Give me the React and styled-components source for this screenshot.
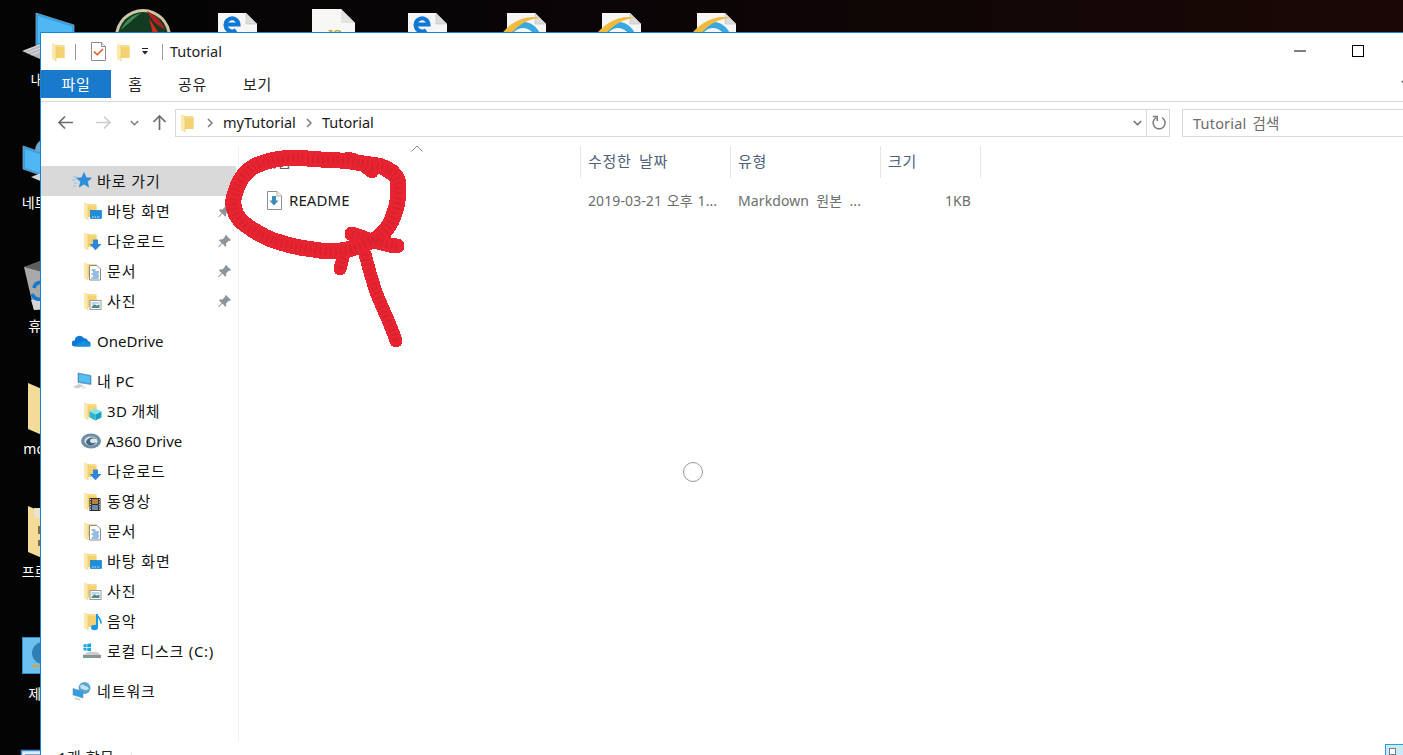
import React from 'react';
import styled, { createGlobalStyle } from 'styled-components';

const UI_FONT = '"Noto Sans", "Noto Sans CJK KR", sans-serif';

const GlobalStyle = createGlobalStyle`
  html, body {
    margin: 0;
    padding: 0;
    height: 100%;
    overflow: hidden;
    background: #050505;
  }
  #root {
    height: 100%;
  }
`;

const Desktop = styled.div`
  position: relative;
  width: 100%;
  height: 100vh;
  overflow: hidden;
  display: flex;
  align-items: flex-start;
  font-family: ${UI_FONT};
  background: linear-gradient(90deg, #040404 0%, #0a0506 45%, #1b0806 100%);
`;

const DesktopColumn = styled.div`
  flex: 0 0 95px;
  padding-top: 8px;
  display: flex;
  flex-direction: column;
`;

const DesktopRow = styled.div`
  padding-top: 8px;
  display: flex;
`;

const DesktopCell = styled.div`
  flex: none;
  width: 95px;
  height: 122.9px;
  padding-top: 4px;
  box-sizing: border-box;
  display: flex;
  flex-direction: column;
  align-items: center;
  color: #fff;
  font-size: 14px;
  line-height: 20px;
  svg {
    flex: none;
    overflow: visible;
    margin-bottom: 2px;
  }
`;

const Window = styled.div`
  position: absolute;
  left: 40px;
  top: 32px;
  width: 1406px;
  height: 743px;
  box-sizing: border-box;
  border: 1px solid #1583d8;
  background: #fff;
  display: flex;
  flex-direction: column;
  color: #1a1a1a;
  font-size: 15px;
`;

const TitleBar = styled.div`
  flex: 0 0 37px;
  display: flex;
  align-items: center;
  padding-left: 11px;
`;

const QatSlot = styled.span`
  display: flex;
  align-items: center;
  margin-left: ${p => p.$ml || 0}px;
`;

const QatSeparator = styled.span`
  width: 1px;
  height: 16px;
  background: #9a9a9a;
  margin-left: ${p => p.$ml}px;
`;

const WindowTitle = styled.span`
  margin-left: 7px;
  padding-bottom: 2px;
  font-size: 14.5px;
  line-height: 20px;
  color: #222;
`;

const WindowControls = styled.div`
  margin-left: auto;
  display: flex;
  height: 100%;
`;

const ControlButton = styled.span`
  width: 58px;
  display: flex;
  align-items: center;
  justify-content: center;
  padding-bottom: 1px;
  box-sizing: border-box;
`;

const Ribbon = styled.div`
  flex: 0 0 32px;
  box-sizing: border-box;
  display: flex;
  align-items: flex-start;
  border-bottom: 1px solid #dadada;
  position: relative;
`;

const RibbonTab = styled.span`
  height: 28px;
  box-sizing: border-box;
  width: ${p => p.$w}px;
  padding-bottom: 2px;
  display: flex;
  align-items: center;
  justify-content: center;
  font-size: 15px;
  letter-spacing: 0.6px;
  background: ${p => (p.$active ? '#1979ca' : 'transparent')};
  color: ${p => (p.$active ? '#fff' : '#222')};
`;

const RibbonChevron = styled.span`
  position: absolute;
  right: 35px;
  top: 10px;
  line-height: 0;
`;

const NavBar = styled.div`
  flex: 0 0 44px;
  box-sizing: border-box;
  display: flex;
  align-items: flex-start;
  padding: 7px 13px 0 14px;
`;

const NavButton = styled.span`
  flex: none;
  width: 20px;
  height: 27px;
  display: flex;
  align-items: center;
  justify-content: center;
  margin-right: ${p => p.$mr || 0}px;
`;

const AddressBox = styled.div`
  flex: 1;
  height: 28px;
  box-sizing: border-box;
  border: 1px solid #d9d9d9;
  display: flex;
  align-items: center;
  padding-left: 5px;
  min-width: 0;
`;

const Crumb = styled.span`
  font-size: 14.5px;
  padding-bottom: 2px;
  color: #1a1a1a;
  margin-left: ${p => p.$ml}px;
`;

const CrumbArrow = styled.svg`
  flex: none;
  margin-left: ${p => p.$ml}px;
`;

const AddressEnd = styled.span`
  margin-left: auto;
  display: flex;
  align-items: center;
  height: 100%;
`;

const RefreshCell = styled.span`
  width: 21px;
  height: 100%;
  margin-left: 3px;
  padding-left: 1px;
  box-sizing: content-box;
  border-left: 1px solid #d9d9d9;
  display: flex;
  align-items: center;
  justify-content: center;
`;

const SearchBox = styled.div`
  flex: 0 0 250px;
  margin-left: 12px;
  height: 28px;
  box-sizing: border-box;
  border: 1px solid #d9d9d9;
  display: flex;
  align-items: center;
  padding: 0 0 2px 10px;
  font-size: 14.5px;
  letter-spacing: 0.2px;
  word-spacing: 2px;
  color: #6d6d6d;
`;

const Body = styled.div`
  flex: 1;
  display: flex;
  min-height: 0;
`;

const Sidebar = styled.nav`
  flex: 0 0 198px;
  box-sizing: border-box;
  padding-top: 20px;
  border-right: 1px solid #f0f0f0;
`;

const NavGroup = styled.div`
  margin-bottom: 10px;
`;

const NavRow = styled.div`
  height: 30px;
  margin-right: 2px;
  display: flex;
  align-items: center;
  gap: 5px;
  padding-left: ${p => (p.$child ? 41 : 31)}px;
  padding-right: 5px;
  background: ${p => (p.$selected ? '#d9d9d9' : 'transparent')};
  svg {
    flex: none;
  }
`;

const LABEL_SPACING = { ko: 0.9, wide: 0.7, mixed: 0.35, latin: 0 };

const NavLabel = styled.span`
  font-size: 15px;
  line-height: 20px;
  letter-spacing: ${p => LABEL_SPACING[p.$kind || 'ko']}px;
  white-space: nowrap;
  color: #111;
`;

const PinSlot = styled.span`
  margin-left: auto;
  line-height: 0;
`;

const Content = styled.div`
  flex: 1;
  position: relative;
`;

const ColumnsGrid = styled.div`
  display: grid;
  grid-template-columns: 342px 150px 150px 100px;
  justify-content: start;
`;

const HeaderCell = styled.div`
  height: 32px;
  box-sizing: border-box;
  border-right: 1px solid #e5e5e5;
  padding: 5px 0 0 ${p => p.$pl ?? 7}px;
  font-size: 15px;
  line-height: 20px;
  letter-spacing: 0.7px;
  word-spacing: 3px;
  color: #4c607a;
`;

const SortChevron = styled.svg`
  position: absolute;
  left: 172px;
  top: -1px;
`;

const FileCell = styled.div`
  height: 30px;
  margin-top: 7px;
  display: flex;
  align-items: center;
  gap: 7px;
  padding-left: ${p => p.$pl ?? 7}px;
  padding-right: ${p => p.$pr ?? 0}px;
  justify-content: ${p => (p.$right ? 'flex-end' : 'flex-start')};
  font-size: ${p => p.$size || 14}px;
  white-space: nowrap;
  letter-spacing: 0.1px;
  word-spacing: ${p => p.$wordGap || 1}px;
  color: ${p => p.$color || '#6d6d6d'};
`;

const StatusBar = styled.div`
  flex: 0 0 32px;
  display: flex;
  align-items: flex-start;
  padding-left: 17px;
`;

const StatusText = styled.span`
  margin-top: 5px;
  font-size: 15px;
  line-height: 20px;
  letter-spacing: 0.5px;
  color: #222;
`;

const StatusDivider = styled.span`
  margin: 10px 0 0 17px;
  width: 1px;
  height: 20px;
  background: #e5e5e5;
`;

const ViewToggle = styled.span`
  margin: 2px 36px 0 auto;
  width: 24px;
  height: 24px;
  box-sizing: border-box;
  background: #cbe8f6;
  border: 1px solid #26a0da;
  padding: 3px;
`;

const ViewGlyph = styled.span`
  display: block;
  width: 7px;
  height: 7px;
  box-sizing: border-box;
  background: #fff;
  border: 1px solid #6d7f8c;
`;

const BusyCursor = styled.span`
  position: absolute;
  left: 683px;
  top: 462px;
  width: 20px;
  height: 20px;
  box-sizing: border-box;
  border-radius: 50%;
  border: 1.5px solid #999;
  background: rgba(255, 255, 255, 0.6);
`;

const Scribble = styled.svg`
  position: absolute;
  left: 0;
  top: 0;
  pointer-events: none;
`;

/* ---- drawn icons ---- */

function FolderShape() {
  return (
    <g>
      <path d="M0 0.5L4 2H12.5V15H4V18L0 16Z" fill="#f7dd8f" />
      <path d="M4 4H12.5V15H4Z" fill="#f4d272" />
      <path d="M0 0.5L4 2V18L0 16Z" fill="#fbe9b0" />
      <path d="M4 2V18" stroke="#e8c463" strokeWidth="0.6" />
    </g>
  );
}

function SmallFolder() {
  return (
    <svg width="14" height="18" viewBox="0 0 14 18">
      <FolderShape />
    </svg>
  );
}

const overlays = {
  desktop: (
    <g>
      <rect x="8.5" y="9.5" width="11" height="8" fill="#1a8fe0" stroke="#0d6fb8" strokeWidth="0.6" />
      <path d="M10 16h8" stroke="#fff" strokeWidth="0.8" strokeDasharray="1.5 1" />
    </g>
  ),
  download: (
    <path d="M11 8.5h5v4.5h3.5l-6 6.2-6-6.2H11z" fill="#2f86d8" />
  ),
  document: (
    <g>
      <path d="M7.5 4.5h7.5l3.5 3.5v11h-11z" fill="#fff" stroke="#8b8b8b" />
      <path d="M9.5 9h4M11 11h6M9.5 13h7M11 15h6M9.5 17h7" stroke="#2b7fc9" strokeWidth="1.1" />
    </g>
  ),
  pictures: (
    <g>
      <rect x="8" y="9.5" width="11" height="9" fill="#fff" stroke="#9a9a9a" />
      <path d="M9.5 16l3-3 2 1.5 3-1v3.5h-8z" fill="#4d8a80" />
      <path d="M9.5 11h8v2l-8 1z" fill="#bcd5e8" />
    </g>
  ),
  cube: (
    <g>
      <path d="M13.5 7.5l6 3-6 3-6-3z" fill="#7fe3ee" />
      <path d="M7.5 10.5v6l6 3v-6z" fill="#2fb5d0" />
      <path d="M19.5 10.5v6l-6 3v-6z" fill="#16a0c2" />
    </g>
  ),
  video: (
    <g>
      <rect x="7.5" y="7" width="11" height="13" fill="#2c2c2c" />
      <path d="M8.6 8v11M17.4 8v11" stroke="#e8e8e8" strokeWidth="1" strokeDasharray="1.2 1.2" />
      <rect x="10" y="8" width="6" height="5" fill="#b9803a" />
      <rect x="10" y="14" width="6" height="5" fill="#6c8da8" />
    </g>
  ),
  music: (
    <g>
      <path d="M15 3.5c.5 3 4.500 4 4 9" fill="none" stroke="#159ae8" strokeWidth="1.6" />
      <path d="M15 3v13" stroke="#159ae8" strokeWidth="2" />
      <ellipse cx="12.5" cy="16.5" rx="3.5" ry="2.8" fill="#159ae8" />
    </g>
  ),
};

function NavFolder({ overlay }) {
  return (
    <svg width="20" height="20" viewBox="0 0 20 20">
      <g transform="translate(2 1)">
        <FolderShape />
      </g>
      {overlays[overlay]}
    </svg>
  );
}

function StarIcon() {
  return (
    <svg width="20" height="20" viewBox="0 0 20 20">
      <path d="M1 6h4M0 9h4M2 12h3M1 15h3" stroke="#8fc0e6" strokeWidth="1" />
      <path d="M12 1.5l2.200 5.200 5.300.4-4.100 3.500 1.300 5.400-4.700-2.900-4.700 2.900 1.300-5.400-4.100-3.500 5.300-.4z" fill="#2a8fdd" stroke="#1a78c2" strokeWidth="0.5" />
    </svg>
  );
}

function CloudIcon() {
  return (
    <svg width="20" height="20" viewBox="0 0 20 20">
      <path d="M2.500 15.500a3 3 0 0 1 .2-6 5 5 0 0 1 9.300-2.200 3.600 3.600 0 0 1 4 2.600 3 3 0 0 1 1 5.600z" fill="#0f78d4" />
      <path d="M5 15.500c-.5-3 2-4 3.500-3.600 1-2.500 5.500-3 7 .2 2.300-.2 3.500 1.500 3 3.400z" fill="#1490df" />
    </svg>
  );
}

function PcIcon() {
  return (
    <svg width="20" height="20" viewBox="0 0 20 20">
      <path d="M6 2l13 2.500v9L6 11.500z" fill="#2f9fe6" stroke="#7a8e9e" strokeWidth="0.7" />
      <path d="M7 3.200l11 2.100v7L7 10.500z" fill="#56bdf2" />
      <path d="M1 16l6-3 5 1.500-6 3z" fill="#c8cdd1" />
      <path d="M9 17l3-1.500 2.500.8-3 1.500z" fill="#dcdfe2" />
    </svg>
  );
}

const ShiftedIcon = styled.span`
  margin-left: -2px;
  margin-right: -1px;
  line-height: 0;
`;

function A360Icon() {
  return (
    <ShiftedIcon>
      <svg width="22" height="20" viewBox="0 0 22 20">
        <ellipse cx="11" cy="10" rx="10" ry="7.500" fill="#6f8ea3" />
        <ellipse cx="11" cy="10" rx="6.500" ry="4.500" fill="#dfe7ec" />
        <path d="M6 11c1-5 9-6 11-2-2-2-7-2-7 1 0 2 4 3 6 1-1 4-9 5-10 0z" fill="#41667f" />
      </svg>
    </ShiftedIcon>
  );
}

function DriveIcon() {
  return (
    <svg width="20" height="20" viewBox="0 0 20 20">
      <path d="M1 14l5-3h9l4 3v3H1z" fill="#c9cdd0" />
      <path d="M1 14h18v3H1z" fill="#8d9297" />
      <rect x="3" y="15" width="3" height="1" fill="#3cc85a" />
      <path d="M1.500 3.500l3-.5v3h-3zM5.200 2.900l3.800-.6V6H5.200zM1.500 6.700h3v3l-3-.4zM5.200 6.700H9v3.600l-3.800-.5z" fill="#14a5e6" />
    </svg>
  );
}

function NetworkIcon() {
  return (
    <svg width="20" height="20" viewBox="0 0 20 20">
      <circle cx="12.500" cy="7" r="6" fill="#58a8d6" />
      <path d="M8 5c2-2 4-1 5 0 2 0 3 1 4 3-2 0-2 2-4 1-2-1-4 0-5-4z" fill="#c7e3ef" />
      <path d="M1 7.500l10 3v6.500l-10-3z" fill="#2f9fe6" stroke="#7a8e9e" strokeWidth="0.6" />
      <path d="M3 16.500l6 1.500-1.500 1.500-5-1.500z" fill="#c8cdd1" />
    </svg>
  );
}

function PinIcon() {
  return (
    <svg width="13" height="13" viewBox="0 0 13 13">
      <path d="M8 0l5 5-1.500 1-.8-.3-2.700 2.700.3 2.300-1.200 1L4.500 8.600.8 12.300 0 12l3.600-4.100L1 5.400l1-1.200 2.400.3L7 1.800l-.2-.8z" fill="#8c959c" />
    </svg>
  );
}

const ARROW_ROTATION = { left: 0, right: 180, up: 90 };

function ArrowIcon({ dir, color }) {
  return (
    <svg width="17" height="17" viewBox="0 0 17 17">
      <g transform={`rotate(${ARROW_ROTATION[dir]} 8.500 8.500)`}>
        <path d="M16 8.500H2M8 2.500l-6 6 6 6" fill="none" stroke={color} strokeWidth="1.700" />
      </g>
    </svg>
  );
}

function ChevronDown({ color, width = 9 }) {
  return (
    <svg width={width} height="6" viewBox="0 0 9 6">
      <path d="M0.800 1l3.700 3.700L8.200 1" fill="none" stroke={color} strokeWidth="1.500" />
    </svg>
  );
}

function RefreshIcon() {
  return (
    <svg width="16" height="16" viewBox="0 0 16 16">
      <path d="M5.200 2.600A6 6 0 1 0 11 2.600" fill="none" stroke="#7f7f7f" strokeWidth="1.600" />
      <path d="M1.800 1.500h4.400v4.400" fill="none" stroke="#7f7f7f" strokeWidth="1.600" />
    </svg>
  );
}

function CheckDoc() {
  return (
    <svg width="15" height="19" viewBox="0 0 15 19">
      <path d="M.5.5h10l4 4v14H.5z" fill="#fff" stroke="#8d8d8d" />
      <path d="M10.500.5v4h4" fill="#eee" stroke="#8d8d8d" />
      <path d="M3 9.500l3.200 3.200L12 7" fill="none" stroke="#e8541c" strokeWidth="1.500" />
    </svg>
  );
}

function ReadmeIcon() {
  return (
    <svg width="15" height="19" viewBox="0 0 15 19">
      <path d="M.5.5h9.500l4.500 4.500v13.500H.5z" fill="#fff" stroke="#8e8e8e" />
      <path d="M10 .5V5h4.500" fill="#f0f0f0" stroke="#b0b0b0" />
      <path d="M5 5h4v4.500h2.500l-4.500 5-4.500-5H5z" fill="#3d8cb5" />
    </svg>
  );
}

/* desktop icons, roughly 56px, most of each one sits under the window */

function DeskMonitor() {
  return (
    <svg width="56" height="56" viewBox="0 0 56 56">
      <path d="M16 1l38 12v28L16 34z" fill="#2f9fe6" stroke="#8aa0b0" strokeWidth="0.8" />
      <path d="M18 4l34 10.500v24L18 31z" fill="#4fb8f4" />
      <path d="M2 39l18-7 18 8-18 7z" fill="#b6babd" />
      <path d="M4 39l16-6M7 41l16-6M11 43l16-6" stroke="#e4e6e8" strokeWidth="0.8" />
    </svg>
  );
}

function DeskNetwork() {
  return (
    <svg width="56" height="56" viewBox="0 0 56 56">
      <circle cx="28" cy="16" r="13" fill="#6aa9c9" />
      <path d="M3 11l32 11v23L3 34z" fill="#2f9fe6" stroke="#8aa0b0" strokeWidth="0.8" />
      <path d="M5 14l28 9.500v19L5 33z" fill="#4fb8f4" />
      <path d="M11 42l10-4 14 6-10 4z" fill="#d5d8da" />
    </svg>
  );
}

function DeskRecycle() {
  return (
    <svg width="56" height="56" viewBox="0 0 56 56">
      <path d="M4 9L40 3l12 4-4 42-34 3z" fill="#a9a9a9" />
      <path d="M4 9L22 2h18l12 5-30 7z" fill="#5e5e5e" />
      <path d="M14 52L11 42l29-4 8 4v7z" fill="#d5d5d5" />
      <path d="M14 30c1-5 6-7 10-5M12 36c2 5 6 6 11 5M28 26c3 3 4 8 2 12" fill="none" stroke="#1278d0" strokeWidth="3.500" />
    </svg>
  );
}

function DeskFolder({ papers }) {
  return (
    <svg width="56" height="56" viewBox="0 0 56 56">
      <path d="M8 2l14 6h28v40H22v6L8 48z" fill="#f3dc98" />
      <path d="M22 8v46" stroke="#d9bb63" strokeWidth="0.8" />
      {papers && <path d="M14 4h24v10H14z" fill="#e8e2d0" />}
      {papers && <path d="M18 22h6v8h-6zM18 36h6v6h-6z" fill="#8a6a44" />}
    </svg>
  );
}

function DeskControlPanel() {
  return (
    <svg width="56" height="56" viewBox="0 0 56 56">
      <rect x="2.500" y="11.500" width="44" height="36" fill="#6cc0ee" stroke="#2e8fca" />
      <circle cx="23" cy="27" r="11" fill="#2f80b8" />
      <path d="M23 16a11 11 0 0 1 11 11H23z" fill="#e8a02c" />
      <path d="M12 40h26" stroke="#e8a02c" strokeWidth="2" />
    </svg>
  );
}

function DeskWindowIcon() {
  return (
    <svg width="56" height="56" viewBox="0 0 56 56">
      <rect x="1.500" y="1.500" width="40" height="36" fill="#dfeaf4" stroke="#3d8fd0" strokeWidth="1.500" />
      <rect x="5" y="5" width="33" height="8" fill="#7ea6d0" />
    </svg>
  );
}

function Page({ dx = 0, children }) {
  return (
    <svg width="56" height="56" viewBox="0 0 56 56">
      <g transform={`translate(${dx} 0)`}>
        <path d="M8 1h28l11 11v40H8z" fill="#f6f6f6" />
        <path d="M36 1v11h11" fill="#dcdcdc" stroke="#c0c0c0" strokeWidth="0.6" />
      </g>
      {children}
    </svg>
  );
}

function DeskEdgeDoc() {
  return (
    <Page>
      <path d="M15.500 12.500H28.500A6.500 6.500 0 1 0 26 18" fill="none" stroke="#0f78d4" strokeWidth="4" />
    </Page>
  );
}

function DeskJsDoc() {
  return (
    <svg width="56" height="56" viewBox="0 0 56 56">
      <path d="M7 -3h29l14 14v44H7z" fill="#f7f7f5" />
      <path d="M36 -3v14h14" fill="#e2e2e0" />
      <text x="21" y="27" fontFamily="Liberation Sans, sans-serif" fontWeight="700" fontSize="13" fill="#b5a93a">JS</text>
    </svg>
  );
}

function DeskIeDoc() {
  return (
    <Page dx={4}>
      <circle cx="28" cy="28" r="15" fill="none" stroke="#3aa8e0" strokeWidth="6" />
      <path d="M5 24C14 11 30 2 46 6c-11 0-23 6-32 18-3 4-7 4-9 0z" fill="#f0bb3c" />
    </Page>
  );
}

function DeskOrb() {
  return (
    <svg width="56" height="56" viewBox="0 0 56 56">
      <circle cx="28" cy="25" r="28" fill="#cfc7a8" />
      <circle cx="28" cy="25" r="25" fill="#123b22" />
      <path d="M32 -1c8 4 14 10 18 18-6-2-12-6-18-18z" fill="#b31f1c" />
      <path d="M34 6l9 14 1 14-6-12z" fill="#d9271f" />
      <path d="M6 18C10 8 18 3 26 1c-8 6-14 12-20 17z" fill="#3e8a52" />
    </svg>
  );
}

/* red marker drawn on the screenshot by hand */

const SCRIBBLE_RING =
  'M392 172 C380 163 372 166 348 161 C335 160 320 160 302 158 C285 157 268 160 255 166 C243 172 236 186 233 202 C234 212 238 220 246 225 C258 234 270 240 282 243 C292 246 300 248 310 249 C320 251 332 252 345 250 C358 248 368 243 378 238 C386 231 392 222 394 214 C398 204 399 192 398 182 C397 176 394 174 388 170';
const SCRIBBLE_TOP = 'M348 158 C358 160 364 166 372 172';
const SCRIBBLE_KNOT = 'M352 234 C360 236 368 241 378 242 C386 244 392 246 397 246';
const SCRIBBLE_TAIL = 'M344 252 C343 258 342 262 340 269';
const SCRIBBLE_ARROW = 'M365 254 C368 266 372 280 376 292 C382 308 390 322 396 341';

const markerStrokes = [
  [SCRIBBLE_RING, 16],
  [SCRIBBLE_TOP, 13],
  [SCRIBBLE_KNOT, 15],
  [SCRIBBLE_TAIL, 13],
  [SCRIBBLE_ARROW, 13],
];

function Marker() {
  return (
    <Scribble width="1403" height="755" viewBox="0 0 1403 755" shapeRendering="crispEdges">
      {markerStrokes.map(([d, w]) => (
        <path key={d} d={d} fill="none" stroke="#e92431" strokeWidth={w} strokeLinecap="round" strokeLinejoin="round" />
      ))}
      {markerStrokes.map(([d, w]) => (
        <path key={`${d}-h`} d={d} fill="none" stroke="#d92130" strokeWidth={w * 0.5} strokeDasharray="2 3" />
      ))}
    </Scribble>
  );
}

const quickAccess = [
  { overlay: 'desktop', label: '바탕 화면' },
  { overlay: 'download', label: '다운로드' },
  { overlay: 'document', label: '문서' },
  { overlay: 'pictures', label: '사진' },
];

const pcItems = [
  { overlay: 'cube', label: '3D 개체', kind: 'mixed' },
  { icon: <A360Icon />, label: 'A360 Drive', kind: 'latin' },
  { overlay: 'download', label: '다운로드' },
  { overlay: 'video', label: '동영상' },
  { overlay: 'document', label: '문서' },
  { overlay: 'desktop', label: '바탕 화면' },
  { overlay: 'pictures', label: '사진' },
  { overlay: 'music', label: '음악' },
  { icon: <DriveIcon />, label: '로컬 디스크 (C:)', kind: 'wide' },
];

const leftIcons = [
  { icon: <DeskMonitor />, label: '내 PC' },
  { icon: <DeskNetwork />, label: '네트워크' },
  { icon: <DeskRecycle />, label: '휴지통' },
  { icon: <DeskFolder />, label: 'models' },
  { icon: <DeskFolder papers />, label: '프로그램' },
  { icon: <DeskControlPanel />, label: '제어판' },
  { icon: <DeskWindowIcon />, label: '' },
];

const topIcons = [
  { id: 'orb', icon: <DeskOrb /> },
  { id: 'edge-1', icon: <DeskEdgeDoc /> },
  { id: 'js', icon: <DeskJsDoc /> },
  { id: 'edge-2', icon: <DeskEdgeDoc /> },
  { id: 'ie-1', icon: <DeskIeDoc /> },
  { id: 'ie-2', icon: <DeskIeDoc /> },
  { id: 'ie-3', icon: <DeskIeDoc /> },
];

function App() {
  return (
    <Desktop>
      <GlobalStyle />
      <DesktopColumn>
        {leftIcons.map(item => (
          <DesktopCell key={item.label || 'window'}>
            {item.icon}
            <span>{item.label}</span>
          </DesktopCell>
        ))}
      </DesktopColumn>
      <DesktopRow>
        {topIcons.map(item => (
          <DesktopCell key={item.id}>{item.icon}</DesktopCell>
        ))}
      </DesktopRow>

      <Window>
        <TitleBar>
          <QatSlot><SmallFolder /></QatSlot>
          <QatSeparator $ml={9} />
          <QatSlot $ml={15}><CheckDoc /></QatSlot>
          <QatSlot $ml={11}><SmallFolder /></QatSlot>
          <QatSlot $ml={10}>
            <svg width="8" height="8" viewBox="0 0 8 8">
              <path d="M1 0h6v1H1zM1 3h6L4 6.500z" fill="#222" />
            </svg>
          </QatSlot>
          <QatSeparator $ml={13} />
          <WindowTitle>Tutorial</WindowTitle>
          <WindowControls>
            <ControlButton>
              <svg width="12" height="2" viewBox="0 0 12 2"><path d="M0 1h12" stroke="#000" strokeWidth="1" /></svg>
            </ControlButton>
            <ControlButton>
              <svg width="12" height="12" viewBox="0 0 12 12"><rect x="0.500" y="0.500" width="11" height="11" fill="none" stroke="#000" /></svg>
            </ControlButton>
            <ControlButton>
              <svg width="12" height="12" viewBox="0 0 12 12"><path d="M0 0l12 12M12 0L0 12" stroke="#000" /></svg>
            </ControlButton>
          </WindowControls>
        </TitleBar>

        <Ribbon>
          <RibbonTab $active $w={70}>파일</RibbonTab>
          <RibbonTab $w={49}>홈</RibbonTab>
          <RibbonTab $w={65}>공유</RibbonTab>
          <RibbonTab $w={65}>보기</RibbonTab>
          <RibbonChevron><ChevronDown color="#666" /></RibbonChevron>
        </Ribbon>

        <NavBar>
          <NavButton $mr={18}><ArrowIcon dir="left" color="#6d6d6d" /></NavButton>
          <NavButton $mr={11}><ArrowIcon dir="right" color="#cdcdcd" /></NavButton>
          <NavButton $mr={5}><ChevronDown color="#7a7a7a" /></NavButton>
          <NavButton $mr={6}><ArrowIcon dir="up" color="#6d6d6d" /></NavButton>
          <AddressBox>
            <SmallFolder />
            <CrumbArrow $ml={12} width="6" height="10" viewBox="0 0 6 10">
              <path d="M1 1l4 4-4 4" fill="none" stroke="#7a7a7a" strokeWidth="1.500" />
            </CrumbArrow>
            <Crumb $ml={10}>myTutorial</Crumb>
            <CrumbArrow $ml={10} width="6" height="10" viewBox="0 0 6 10">
              <path d="M1 1l4 4-4 4" fill="none" stroke="#7a7a7a" strokeWidth="1.500" />
            </CrumbArrow>
            <Crumb $ml={10}>Tutorial</Crumb>
            <AddressEnd>
              <ChevronDown color="#6d6d6d" width={11} />
              <RefreshCell><RefreshIcon /></RefreshCell>
            </AddressEnd>
          </AddressBox>
          <SearchBox>Tutorial 검색</SearchBox>
        </NavBar>

        <Body>
          <Sidebar>
            <NavGroup>
              <NavRow $selected>
                <StarIcon />
                <NavLabel>바로 가기</NavLabel>
              </NavRow>
              {quickAccess.map(item => (
                <NavRow $child key={item.label}>
                  <NavFolder overlay={item.overlay} />
                  <NavLabel>{item.label}</NavLabel>
                  <PinSlot><PinIcon /></PinSlot>
                </NavRow>
              ))}
            </NavGroup>
            <NavGroup>
              <NavRow>
                <CloudIcon />
                <NavLabel $kind="latin">OneDrive</NavLabel>
              </NavRow>
            </NavGroup>
            <NavGroup>
              <NavRow>
                <PcIcon />
                <NavLabel $kind="mixed">내 PC</NavLabel>
              </NavRow>
              {pcItems.map(item => (
                <NavRow $child key={item.label}>
                  {item.icon || <NavFolder overlay={item.overlay} />}
                  <NavLabel $kind={item.kind}>{item.label}</NavLabel>
                </NavRow>
              ))}
            </NavGroup>
            <NavGroup>
              <NavRow>
                <NetworkIcon />
                <NavLabel>네트워크</NavLabel>
              </NavRow>
            </NavGroup>
          </Sidebar>

          <Content>
            <SortChevron width="12" height="7" viewBox="0 0 12 7">
              <path d="M.5 6.500l5.500-5.500 5.500 5.500" fill="none" stroke="#8a8a8a" />
            </SortChevron>
            <ColumnsGrid>
              <HeaderCell $pl={24}>이름</HeaderCell>
              <HeaderCell>수정한 날짜</HeaderCell>
              <HeaderCell>유형</HeaderCell>
              <HeaderCell>크기</HeaderCell>
              <FileCell $pl={28} $size={15} $color="#1a1a1a">
                <ReadmeIcon />
                <span>README</span>
              </FileCell>
              <FileCell>2019-03-21 오후 1...</FileCell>
              <FileCell $wordGap={3.5}>Markdown 원본 ...</FileCell>
              <FileCell $right $pr={10}>1KB</FileCell>
            </ColumnsGrid>
          </Content>
        </Body>

        <StatusBar>
          <StatusText>1개 항목</StatusText>
          <StatusDivider />
          <ViewToggle><ViewGlyph /></ViewToggle>
        </StatusBar>
      </Window>

      <BusyCursor />
      <Marker />
    </Desktop>
  );
}

export default App;
